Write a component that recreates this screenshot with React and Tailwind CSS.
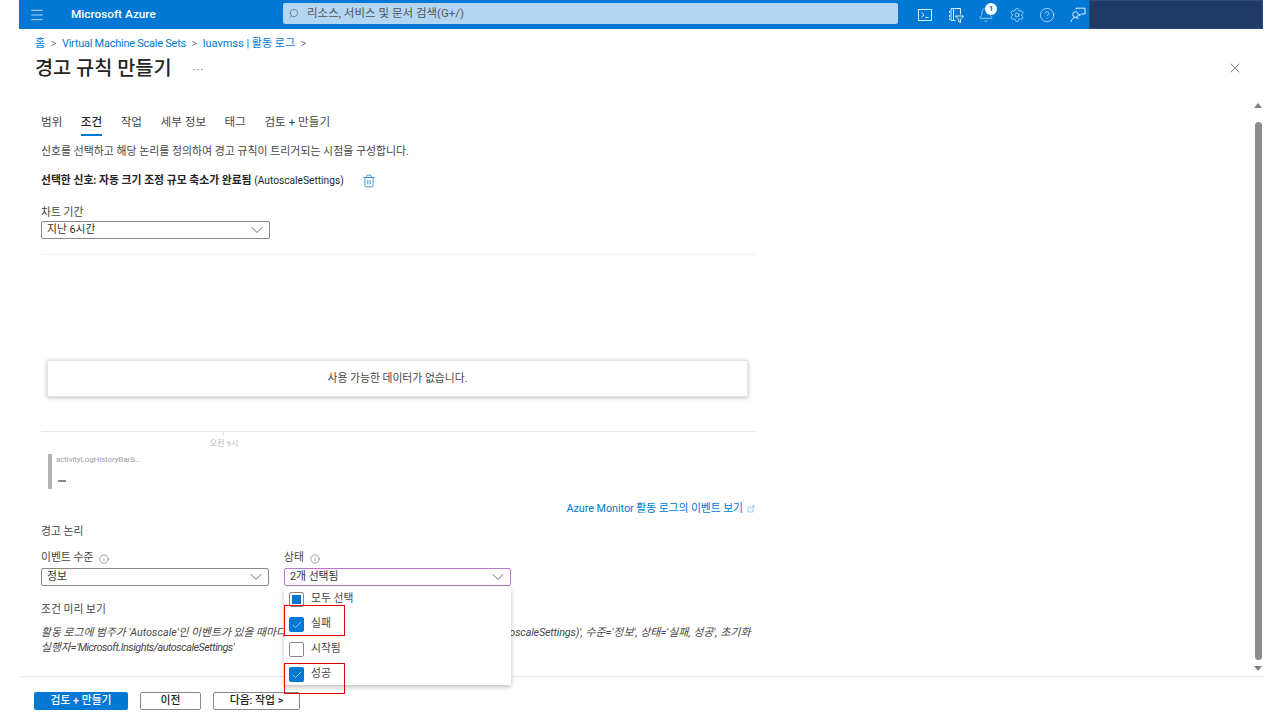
import React from "react";
import { Bell, Check, ChevronDown, CircleHelp, ExternalLink, Info, Menu, Search, Settings, Trash2, X } from "lucide-react";

const fontStack = "[font-family:'Roboto','Noto_Sans_CJK_KR',sans-serif]";

function TerminalIcon() {
  return (
    <svg width="16" height="16" viewBox="0 0 16 16" fill="none" stroke="currentColor" strokeWidth="1">
      <rect x="1.5" y="2.5" width="13" height="11" />
      <path d="M4.5 5.5l2.5 2.3-2.5 2.3M8 10.5h3.5" />
    </svg>
  );
}

function DirectoryIcon() {
  return (
    <svg width="16" height="16" viewBox="0 0 16 16" fill="none" stroke="currentColor" strokeWidth="1">
      <path d="M3 1.5h9.5v6M3 1.5v12h4.5M5.5 1.5v12M1.5 4v2M1.5 8v2M1.5 11.5v1.5" />
      <path d="M7.5 9h8l-3 3.2v3.3l-1.9-.9v-2.4z" />
    </svg>
  );
}

function FeedbackIcon() {
  return (
    <svg width="16" height="16" viewBox="0 0 16 16" fill="none" stroke="currentColor" strokeWidth="1">
      <circle cx="5.5" cy="7.5" r="2.8" />
      <path d="M1 15c.3-2.700 2.200-4.400 4.500-4.400 1.300 0 2.300.4 3.100 1.200" />
      <path d="M6 2.500V1.200h9v5.800h-3.500l-2 1.800V7" />
    </svg>
  );
}

function HeaderIcon({ children }) {
  return <div className="relative flex w-[30.5px] shrink-0 items-center justify-center">{children}</div>;
}

function Header() {
  return (
    <div className="flex h-[29px] shrink-0 bg-[#0078d4] text-white">
      <div className="flex w-[36px] items-center justify-center">
        <Menu size={16} strokeWidth={1.2} className="text-[#e0eefa]" />
      </div>
      <div className="ml-[16px] w-[212px] pt-[6px] text-[11.8px] leading-[17px] font-medium">Microsoft Azure</div>
      <div className="mt-[3px] flex h-[21px] w-[615px] items-center gap-[8px] rounded-[2px] bg-[#b3d6f2] pl-[5px] text-[11.5px] text-[#555]">
        <Search size={11} strokeWidth={1.3} className="-scale-x-100" />
        <span className="pt-[1px]">리소스, 서비스 및 문서 검색(G+/)</span>
      </div>
      <div className="flex w-[191px] items-stretch pl-[12px] text-[#e0eefa]">
        <HeaderIcon><TerminalIcon /></HeaderIcon>
        <HeaderIcon><DirectoryIcon /></HeaderIcon>
        <HeaderIcon>
          <Bell size={16} strokeWidth={1} />
          <span className="absolute top-[3px] left-[14px] flex h-[12px] w-[12px] items-center justify-center rounded-full bg-white text-[8px] font-bold text-[#0078d4]">1</span>
        </HeaderIcon>
        <HeaderIcon><Settings size={16} strokeWidth={1} /></HeaderIcon>
        <HeaderIcon><CircleHelp size={16} strokeWidth={1.1} /></HeaderIcon>
        <HeaderIcon><FeedbackIcon /></HeaderIcon>
      </div>
      <div className="relative flex-1 border border-[#2b4a80] bg-[#203a68]"></div>
    </div>
  );
}

function Select({ value, className }) {
  return (
    <div className={`flex h-[18px] items-center justify-between rounded-[2px] border pr-[2px] pl-[5px] text-[10.8px] text-[#323130] ${className}`}>
      <span>{value}</span>
      <ChevronDown size={20} strokeWidth={0.9} />
    </div>
  );
}

function Label({ text }) {
  return (
    <div className="flex h-[19px] items-center gap-[6px] text-[10.8px] text-[#484644]">
      <span>{text}</span>
      <Info size={10} strokeWidth={1.2} />
    </div>
  );
}

function Option({ label, state }) {
  return (
    <div className="flex h-[25px] shrink-0 items-center gap-[7px] text-[10.8px] text-[#484644]">
      {state === "checked" && (
        <span className="flex h-[15px] w-[15px] items-center justify-center rounded-[2px] bg-[#0078d4] text-white">
          <Check size={12} strokeWidth={1.2} />
        </span>
      )}
      {state === "partial" && (
        <span className="flex h-[15px] w-[15px] items-center justify-center rounded-[2px] border border-[#8a8886]">
          <span className="h-[9px] w-[9px] bg-[#0078d4]"></span>
        </span>
      )}
      {state === "empty" && <span className="h-[15px] w-[15px] rounded-[2px] border border-[#8a8886]"></span>}
      <span>{label}</span>
    </div>
  );
}

const tabs = [
  { label: "범위" },
  { label: "조건", active: true },
  { label: "작업" },
  { label: "세부 정보" },
  { label: "태그" },
  { label: "검토 + 만들기" },
];

export default function App() {
  return (
    <div className={`flex h-[720px] w-[1280px] flex-col overflow-hidden bg-white pr-[17px] pl-[19px] ${fontStack}`}>
      <Header />

      {/* Title area */}
      <div className="flex h-[67px] shrink-0 justify-between pr-[20px] pl-[16px]">
        <div>
          <div className="flex h-[31px] items-center gap-[5.5px] text-[11px] text-[#0078d4]">
            <span>홈</span>
            <span className="text-[#777]">&gt;</span>
            <span className="tracking-[-0.25px]">Virtual Machine Scale Sets</span>
            <span className="text-[#777]">&gt;</span>
            <span>luavmss | 활동 로그</span>
            <span className="text-[#777]">&gt;</span>
          </div>
          <div className="-mt-[1px] flex items-center gap-[21px]">
            <h1 className="text-[19.7px] leading-[20px] font-medium text-[#252423]">경고 규칙 만들기</h1>
            <span className="mt-[4px] text-[11px] tracking-[1px] text-[#555]">···</span>
          </div>
        </div>
        <X size={16} strokeWidth={1} className="mt-[31px] text-[#444]" />
      </div>

      {/* Scrollable body */}
      <div className="flex h-[581px] shrink-0 border-b border-[#e8e8e8]">
        <div className="w-[1234px] pt-[18px] pl-[22px]">
          <div className="flex h-[24px] gap-[18.5px] text-[11.6px] text-[#484644]">
            {tabs.map((tab) => (
              <div key={tab.label} className={`h-[22px] leading-[16px] ${tab.active ? "border-b-2 border-[#0078d4] font-medium text-[#252423]" : ""}`}>
                {tab.label}
              </div>
            ))}
          </div>
          <p className="mt-[4px] text-[10.9px] leading-[20px] text-[#484644]">신호를 선택하고 해당 논리를 정의하여 경고 규칙이 트리거되는 시점을 구성합니다.</p>
          <div className="mt-[9px] flex h-[20px] items-center gap-[18px] text-[10.8px] text-[#252423]">
            <span>
              <span className="font-bold">선택한 신호: 자동 크기 조정 규모 축소가 완료됨</span> <span className="text-[10.2px]">(AutoscaleSettings)</span>
            </span>
            <Trash2 size={14} strokeWidth={1.5} className="text-[#1f88d8]" />
          </div>
          <div className="mt-[12px] h-[18px] text-[10.8px] leading-[20px] text-[#484644]">차트 기간</div>
          <Select value="지난 6시간" className="w-[229px] border-[#8a8886]" />

          {/* Chart */}
          <div className="mt-[15px] w-[714px] border-t border-[#f0f0f0]">
            <div className="mt-[105px] ml-[6px] flex h-[37px] w-[701px] items-center justify-center border border-[#e6e6e6] pt-[2px] text-[10.8px] text-[#484644] shadow-[0_1px_4px_rgba(0,0,0,0.25)]">
              사용 가능한 데이터가 없습니다.
            </div>
            <div className="mt-[34px] border-t border-[#e8e8e8]">
              <div className="ml-[182px] h-[3px] w-px bg-[#e0e0e0]"></div>
              <div className="ml-[168px] w-[30px] pt-[3px] text-center text-[8px] leading-[12px] text-[#b5b5b5]">오전 9시</div>
            </div>
            <div className="mt-[4px] ml-[7px] flex h-[35px] gap-[4px]">
              <div className="w-[4px] bg-[#b3b3b3]"></div>
              <div>
                <div className="pt-[1px] text-[8px] leading-[10px] tracking-[-0.1px] text-[#a0a0a0]">activityLogHistoryBarS...</div>
                <div className="mt-[15px] ml-[2px] h-[2px] w-[8px] bg-[#8a8a8a]"></div>
              </div>
            </div>
            <div className="mt-[12px] flex items-center justify-end gap-[4px] text-[10.8px] leading-[16px] tracking-[-0.05px] text-[#0078d4]">
              <span>Azure Monitor 활동 로그의 이벤트 보기</span>
              <ExternalLink size={8} strokeWidth={1.2} />
            </div>
          </div>

          {/* Alert logic */}
          <div className="mt-[5px] h-[20px] text-[10.8px] leading-[20px] text-[#484644]">경고 논리</div>
          <div className="mt-[7px] flex gap-[15px]">
            <div className="w-[228px]">
              <Label text="이벤트 수준" />
              <Select value="정보" className="border-[#8a8886]" />
            </div>
            <div className="relative w-[227px]">
              <Label text="상태" />
              <Select value="2개 선택됨" className="border-[#b878d0]" />
              <div className="absolute top-[38px] left-0 z-10 flex h-[98px] w-[227px] flex-col bg-white pl-[5px] shadow-[0_2px_5px_rgba(0,0,0,0.25)]">
                <Option label="모두 선택" state="partial" />
                <Option label="실패" state="checked" />
                <Option label="시작됨" state="empty" />
                <Option label="성공" state="checked" />
              </div>
              <div className="absolute top-[56px] left-0 z-20 h-[31px] w-[61px] border border-[#e00000]"></div>
              <div className="absolute top-[114px] left-0 z-20 h-[31px] w-[61px] border border-[#e00000]"></div>
            </div>
          </div>
          <div className="mt-[14px] h-[20px] text-[10.8px] leading-[20px] text-[#484644]">조건 미리 보기</div>
          <div className="mt-[5px] w-[714px] text-[10.8px] leading-[15px] whitespace-nowrap text-[#484644] italic">
            <div>
              활동 로그에 범주가 'Autoscale'인 이벤트가 있을 때마다, <span className="tracking-[-0.18px]">신호 이름='자동 크기 조정 규모 축소가 완료됨 (AutoscaleSettings)',</span> <span className="text-[11px]">수준='정보', 상태='실패, 성공', 초기화</span>
            </div>
            <div>
              실행자=<span className="tracking-[-0.5px]">'Microsoft.Insights/autoscaleSettings'</span>
            </div>
          </div>
        </div>

        {/* Scrollbar */}
        <div className="flex w-[10px] flex-col items-center pt-[7px]">
          <div className="h-0 w-0 border-x-[4px] border-b-[5px] border-x-transparent border-b-[#808080]"></div>
          <div className="mt-[14px] h-[538px] w-[7px] rounded-full bg-[#8c8c8c]"></div>
          <div className="mt-[6px] h-0 w-0 border-x-[4px] border-t-[5px] border-x-transparent border-t-[#808080]"></div>
        </div>
      </div>

      {/* Footer */}
      <div className="flex gap-[12px] pt-[15px] pl-[15px] text-[10.8px] font-medium">
        <button className="h-[18px] w-[94px] rounded-[2px] bg-[#0078d4] text-white">검토 + 만들기</button>
        <button className="h-[18px] w-[61px] rounded-[2px] border border-[#8a8886] text-[#252423]">이전</button>
        <button className="h-[18px] w-[87px] rounded-[2px] border border-[#8a8886] text-[#252423]">다음: 작업 &gt;</button>
      </div>
    </div>
  );
}
